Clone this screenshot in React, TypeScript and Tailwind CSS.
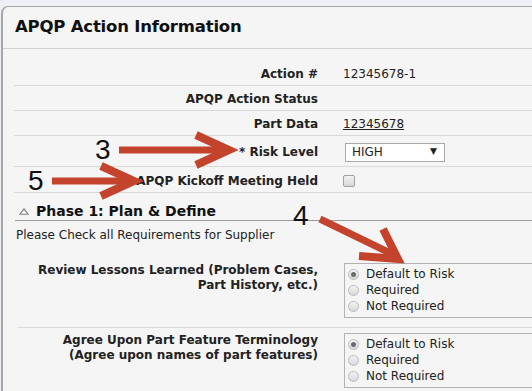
import React from 'react';

type Row = { label: string; h: string; value?: React.ReactNode };

function Radio({ checked = false }: { checked?: boolean }) {
  return (
    <span className="flex h-[11px] w-[11px] items-center justify-center rounded-full border border-[#b9b9b9] bg-gradient-to-b from-[#f4f4f4] to-[#d9d9d9]">
      {checked && <span className="h-[5px] w-[5px] rounded-full bg-[#6a6a6a]" />}
    </span>
  );
}

function RadioBox() {
  const opts = ['Default to Risk', 'Required', 'Not Required'];
  return (
    <div className="ml-[26px] h-[55px] flex-1 border border-r-0 border-[#b3b3b3] pl-[3px] pt-[2px]">
      {opts.map((o, i) => (
        <div key={o} className="flex h-[16px] items-center gap-[7px] text-[12px] text-[#222]">
          <Radio checked={i === 0} />
          <span>{o}</span>
        </div>
      ))}
    </div>
  );
}

// red annotation arrows drawn over the form
function Arrows() {
  return (
    <svg className="pointer-events-none absolute left-0 top-0" width="532" height="391">
      <g stroke="#c4432d" strokeWidth="7" strokeLinecap="butt" fill="none">
        <line x1="119" y1="150" x2="226" y2="150" />
        <polyline points="196,135 229,150 196,165" strokeWidth="8" />
        <line x1="52" y1="181" x2="130" y2="181" />
        <polyline points="101,166 134,181 101,196" strokeWidth="8" />
        <line x1="320" y1="219" x2="392" y2="254" />
        <polyline points="383,229 398,259 359,256" strokeWidth="8" />
      </g>
    </svg>
  );
}

export default function App() {
  const rows: Row[] = [
    { label: 'Action #', h: 'h-[25px]', value: '12345678-1' },
    { label: 'APQP Action Status', h: 'h-[25px]' },
    { label: 'Part Data', h: 'h-[25px]', value: <span className="underline">12345678</span> },
    {
      label: '* Risk Level',
      h: 'h-[31px]',
      value: (
        <div className="ml-[2px] flex h-[19px] w-[100px] items-center justify-between border border-[#a9a9a9] bg-white pl-[6px] pr-[7px] text-[12px]">
          <span>HIGH</span>
          <span className="text-[9px]">▼</span>
        </div>
      ),
    },
    {
      label: 'APQP Kickoff Meeting Held',
      h: 'h-[26px]',
      value: <div className="h-[12px] w-[12px] rounded-[2px] border border-[#a3a3a3] bg-gradient-to-b from-[#f2f2f2] to-[#d8d8d8]" />,
    },
  ];

  return (
    <div className="relative h-[391px] w-[532px] overflow-hidden bg-[#eef0f7] pt-[6px] font-['DejaVu_Sans',sans-serif] text-[#222]">
      <div className="ml-[1px] h-full rounded-tl-[7px] border-l-2 border-t border-[#a6a6a6] bg-[#f5f5f5]">
        {/* Header */}
        <div className="flex h-[42px] items-center border-b border-[#d2d2d2] pl-[12px]">
          <h1 className="text-[16.5px] font-bold tracking-[-0.2px] text-[#111]">APQP Action Information</h1>
        </div>

        {/* Info rows */}
        <div className="ml-[11px] pt-[12px]">
          {rows.map((r) => (
            <div key={r.label} className={`flex items-center border-b border-[#dcdad3] pt-[2px] ${r.h}`}>
              <div className="w-[304px] text-right text-[12px] font-bold text-[#222]">{r.label}</div>
              <div className="pl-[25px] text-[12px]">{r.value}</div>
            </div>
          ))}
        </div>

        {/* Phase section */}
        <div className="ml-[12px] flex h-[28px] items-end border-b border-[#9c9c9c]">
          <svg className="mb-[5px] ml-[4px] mr-[7px]" width="10" height="7" viewBox="0 0 10 7">
            <path d="M5 0.8 L9.2 6.3 L0.8 6.3 Z" fill="#fafafa" stroke="#808080" strokeWidth="1.1" />
          </svg>
          <span className="text-[14px] font-bold leading-[18px] text-[#111]">Phase 1: Plan &amp; Define</span>
        </div>
        <div className="h-[37px] pl-[13px] pt-[5px] text-[12px] text-[#222]">Please Check all Requirements for Supplier</div>

        <div className="ml-[14px]">
          <div className="flex border-b border-[#dcdad3] pb-[9px] pt-[5px]">
            <div className="w-[301px] text-right text-[12px] font-bold leading-[15px]">
              Review Lessons Learned (Problem Cases,
              <br />
              Part History, etc.)
            </div>
            <RadioBox />
          </div>
          <div className="flex pt-[5px]">
            <div className="w-[301px] text-right text-[12px] font-bold leading-[15px]">
              Agree Upon Part Feature Terminology
              <br />
              (Agree upon names of part features)
            </div>
            <RadioBox />
          </div>
        </div>
      </div>

      <Arrows />
      <span className="absolute left-[95px] top-[129px] font-['Liberation_Sans',sans-serif] text-[28px] text-[#111]">3</span>
      <span className="absolute left-[28px] top-[160px] font-['Liberation_Sans',sans-serif] text-[28px] text-[#111]">5</span>
      <span className="absolute left-[293px] top-[195px] font-['Liberation_Sans',sans-serif] text-[28px] text-[#111]">4</span>
    </div>
  );
}
